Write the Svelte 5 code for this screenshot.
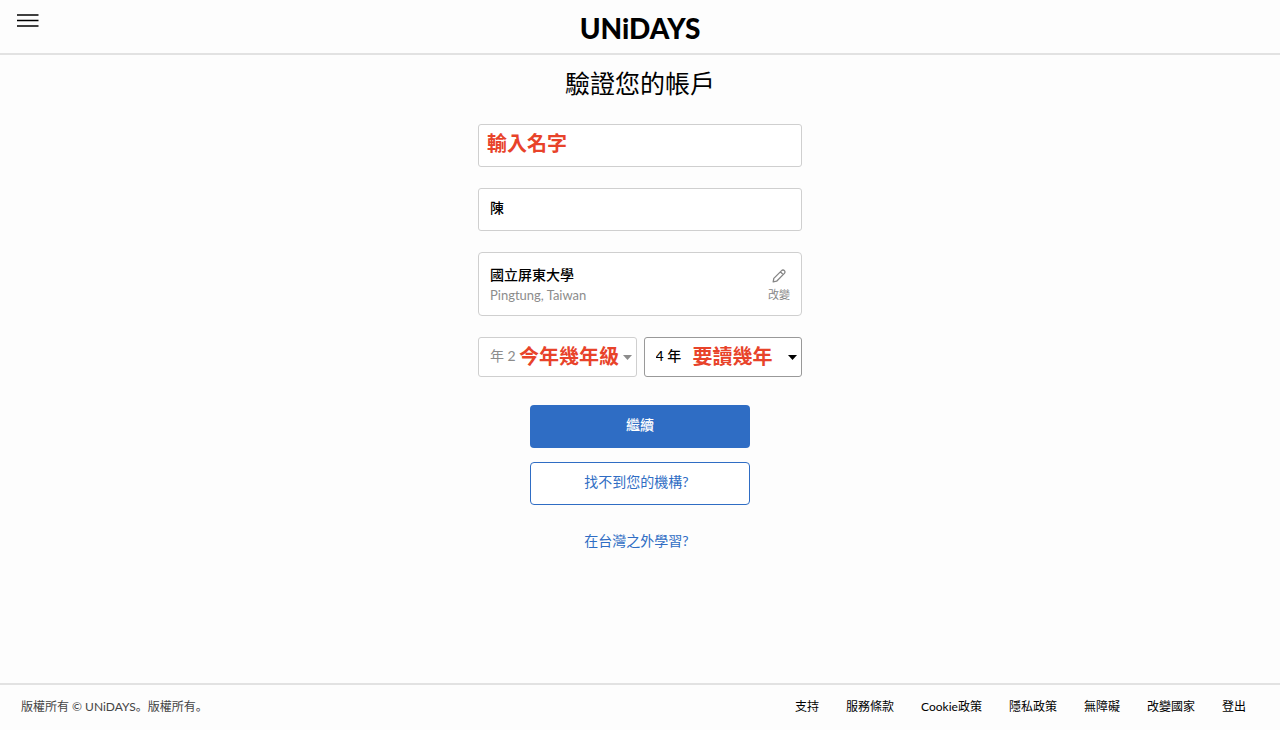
<script>
  let firstName = $state('');
  let lastName = $state('陳');
  let year = $state('2');
  let duration = $state('4');

  const years = ['1', '2', '3', '4', '5', '6'];
  const links = ['支持', '服務條款', 'Cookie政策', '隱私政策', '無障礙', '改變國家', '登出'];
</script>

<div class="page">
  <header>
    <button class="menu" type="button" aria-label="選單">
      <svg width="22" height="14" viewBox="0 0 22 14" aria-hidden="true">
        <path d="M0 1h21.5M0 6.5h21.5M0 12h21.5" stroke="#000" stroke-width="1.7" />
      </svg>
    </button>
    <a class="logo" href="#home">UNiDAYS</a>
  </header>

  <main>
    <h1>驗證您的帳戶</h1>
    <form onsubmit={(e) => e.preventDefault()}>
      <div class="field">
        <input id="first-name" type="text" aria-label="名字" bind:value={firstName} />
        <label class="note note-name" for="first-name">輸入名字</label>
      </div>
      <div class="field">
        <input type="text" aria-label="姓氏" bind:value={lastName} />
      </div>

      <section class="school">
        <div>
          <div class="school-name">國立屏東大學</div>
          <div class="school-place">Pingtung, Taiwan</div>
        </div>
        <button class="change" type="button">
          <svg width="14" height="14" viewBox="0 0 14 14" fill="none" stroke="#858585" stroke-width="1.3" stroke-linejoin="round" aria-hidden="true">
            <path d="M1.2 12.8l.6-3.4L9.6 1.6a1.8 1.8 0 0 1 2.8 2.8L4.6 12.2zM8.4 2.8l2.8 2.8" />
          </svg>
          <span>改變</span>
        </button>
      </section>

      <div class="selects">
        <div class="field muted">
          <select id="year" aria-label="年級" bind:value={year}>
            {#each years as y}<option value={y}>年 {y}</option>{/each}
          </select>
          <svg class="caret" width="9" height="5" viewBox="0 0 9 5" aria-hidden="true"><path d="M0 0h9L4.5 5z" fill="currentColor" /></svg>
          <label class="note note-year" for="year">今年幾年級</label>
        </div>
        <div class="field">
          <select id="duration" aria-label="修業年限" bind:value={duration}>
            {#each years as y}<option value={y}>{y} 年</option>{/each}
          </select>
          <svg class="caret" width="9" height="5" viewBox="0 0 9 5" aria-hidden="true"><path d="M0 0h9L4.5 5z" fill="currentColor" /></svg>
          <label class="note note-duration" for="duration">要讀幾年</label>
        </div>
      </div>

      <div class="actions">
        <button class="btn primary" type="submit">繼續</button>
        <a class="btn outline" href="#missing">找不到您的機構?</a>
        <a class="btn plain" href="#abroad">在台灣之外學習?</a>
      </div>
    </form>
  </main>

  <footer>
    <span class="copyright">版權所有 © UNiDAYS。版權所有。</span>
    <nav>
      {#each links as link}<a href="#{link}">{link}</a>{/each}
    </nav>
  </footer>
</div>

<style>
  :global(body) {
    background: #fdfdfd;
  }
  .page {
    min-height: 100vh;
    display: flex;
    flex-direction: column;
    color: #000;
    font-family: Lato, "Noto Sans CJK TC", sans-serif;
    font-size: 14px;
    line-height: 20px;
  }
  .page, .page :global(*) {
    box-sizing: border-box;
  }
  button, input, select {
    font: inherit;
    color: inherit;
    margin: 0;
  }
  a {
    color: inherit;
    text-decoration: none;
  }
  header {
    display: grid;
    grid-template-columns: 1fr auto 1fr;
    align-items: start;
    height: 55px;
    padding: 14px 17px 0;
    border-bottom: 2px solid #e2e2e2;
  }
  .menu {
    justify-self: start;
    display: flex;
    padding: 0;
    border: 0;
    background: none;
    cursor: pointer;
  }
  .logo {
    font-size: 28px;
    line-height: 28px;
    font-weight: 900;
  }
  main {
    flex: 1;
    display: flex;
    flex-direction: column;
    align-items: center;
    padding: 12px 16px 24px;
  }
  h1 {
    margin: 0 0 24px;
    font-size: 25px;
    line-height: 33px;
    font-weight: 400;
  }
  form {
    width: 100%;
    max-width: 324px;
    display: flex;
    flex-direction: column;
    gap: 21px;
  }
  .field {
    position: relative;
    display: flex;
  }
  input, select {
    width: 100%;
    border: 1px solid #cfcfcf;
    border-radius: 3px;
    background: #fff;
    padding: 0 11px 2px;
    font-weight: 500;
  }
  input {
    height: 43px;
    padding-bottom: 6px;
  }
  select {
    appearance: none;
    height: 40px;
    border-color: #999;
  }
  .muted {
    color: #8c8c8c;
  }
  .muted select {
    border-color: #cfcfcf;
    font-weight: 400;
  }
  .caret {
    position: absolute;
    right: 5px;
    top: 18px;
    pointer-events: none;
  }
  .note {
    position: absolute;
    top: 4px;
    color: #e8432a;
    font-size: 20px;
    line-height: 30px;
    font-weight: 600;
    white-space: nowrap;
  }
  .note-name {
    left: 9px;
  }
  .note-year {
    left: 41px;
  }
  .note-duration {
    left: 49px;
  }
  .school {
    display: flex;
    justify-content: space-between;
    padding: 12px 11px 10px;
    border: 1px solid #cfcfcf;
    border-radius: 4px;
    background: #fff;
  }
  .school-name {
    font-weight: 500;
  }
  .school-place {
    font-size: 13px;
    color: #8c8c8c;
  }
  .change {
    display: flex;
    flex-direction: column;
    align-items: center;
    gap: 4px;
    padding: 4px 0 0;
    border: 0;
    background: none;
    color: #858585;
    font-size: 11px;
    line-height: 16px;
    cursor: pointer;
  }
  .selects {
    display: grid;
    grid-template-columns: 1fr 1fr;
    gap: 7px;
  }
  .actions {
    align-self: center;
    width: 220px;
    padding-top: 7px;
    display: flex;
    flex-direction: column;
    gap: 14px;
  }
  .btn {
    display: flex;
    align-items: center;
    justify-content: center;
    height: 43px;
    padding: 0 0 3px;
    border: 1px solid transparent;
    border-radius: 4px;
    color: #2f6dc4;
  }
  .primary {
    background: #2f6dc4;
    color: #fff;
    font-weight: 500;
    cursor: pointer;
  }
  .outline {
    border-color: #2f6dc4;
    background: #fff;
  }
  .outline, .plain {
    padding-right: 7px;
  }
  .plain {
    padding-bottom: 0;
  }
  footer {
    display: flex;
    justify-content: space-between;
    align-items: center;
    height: 47px;
    padding: 0 34px 2px 21px;
    border-top: 2px solid #e2e2e2;
    font-size: 12px;
    color: #444;
  }
  .copyright {
    font-family: Lato, "Noto Sans CJK JP", sans-serif;
  }
  nav {
    display: flex;
    gap: 27px;
    color: #000;
  }
</style>
